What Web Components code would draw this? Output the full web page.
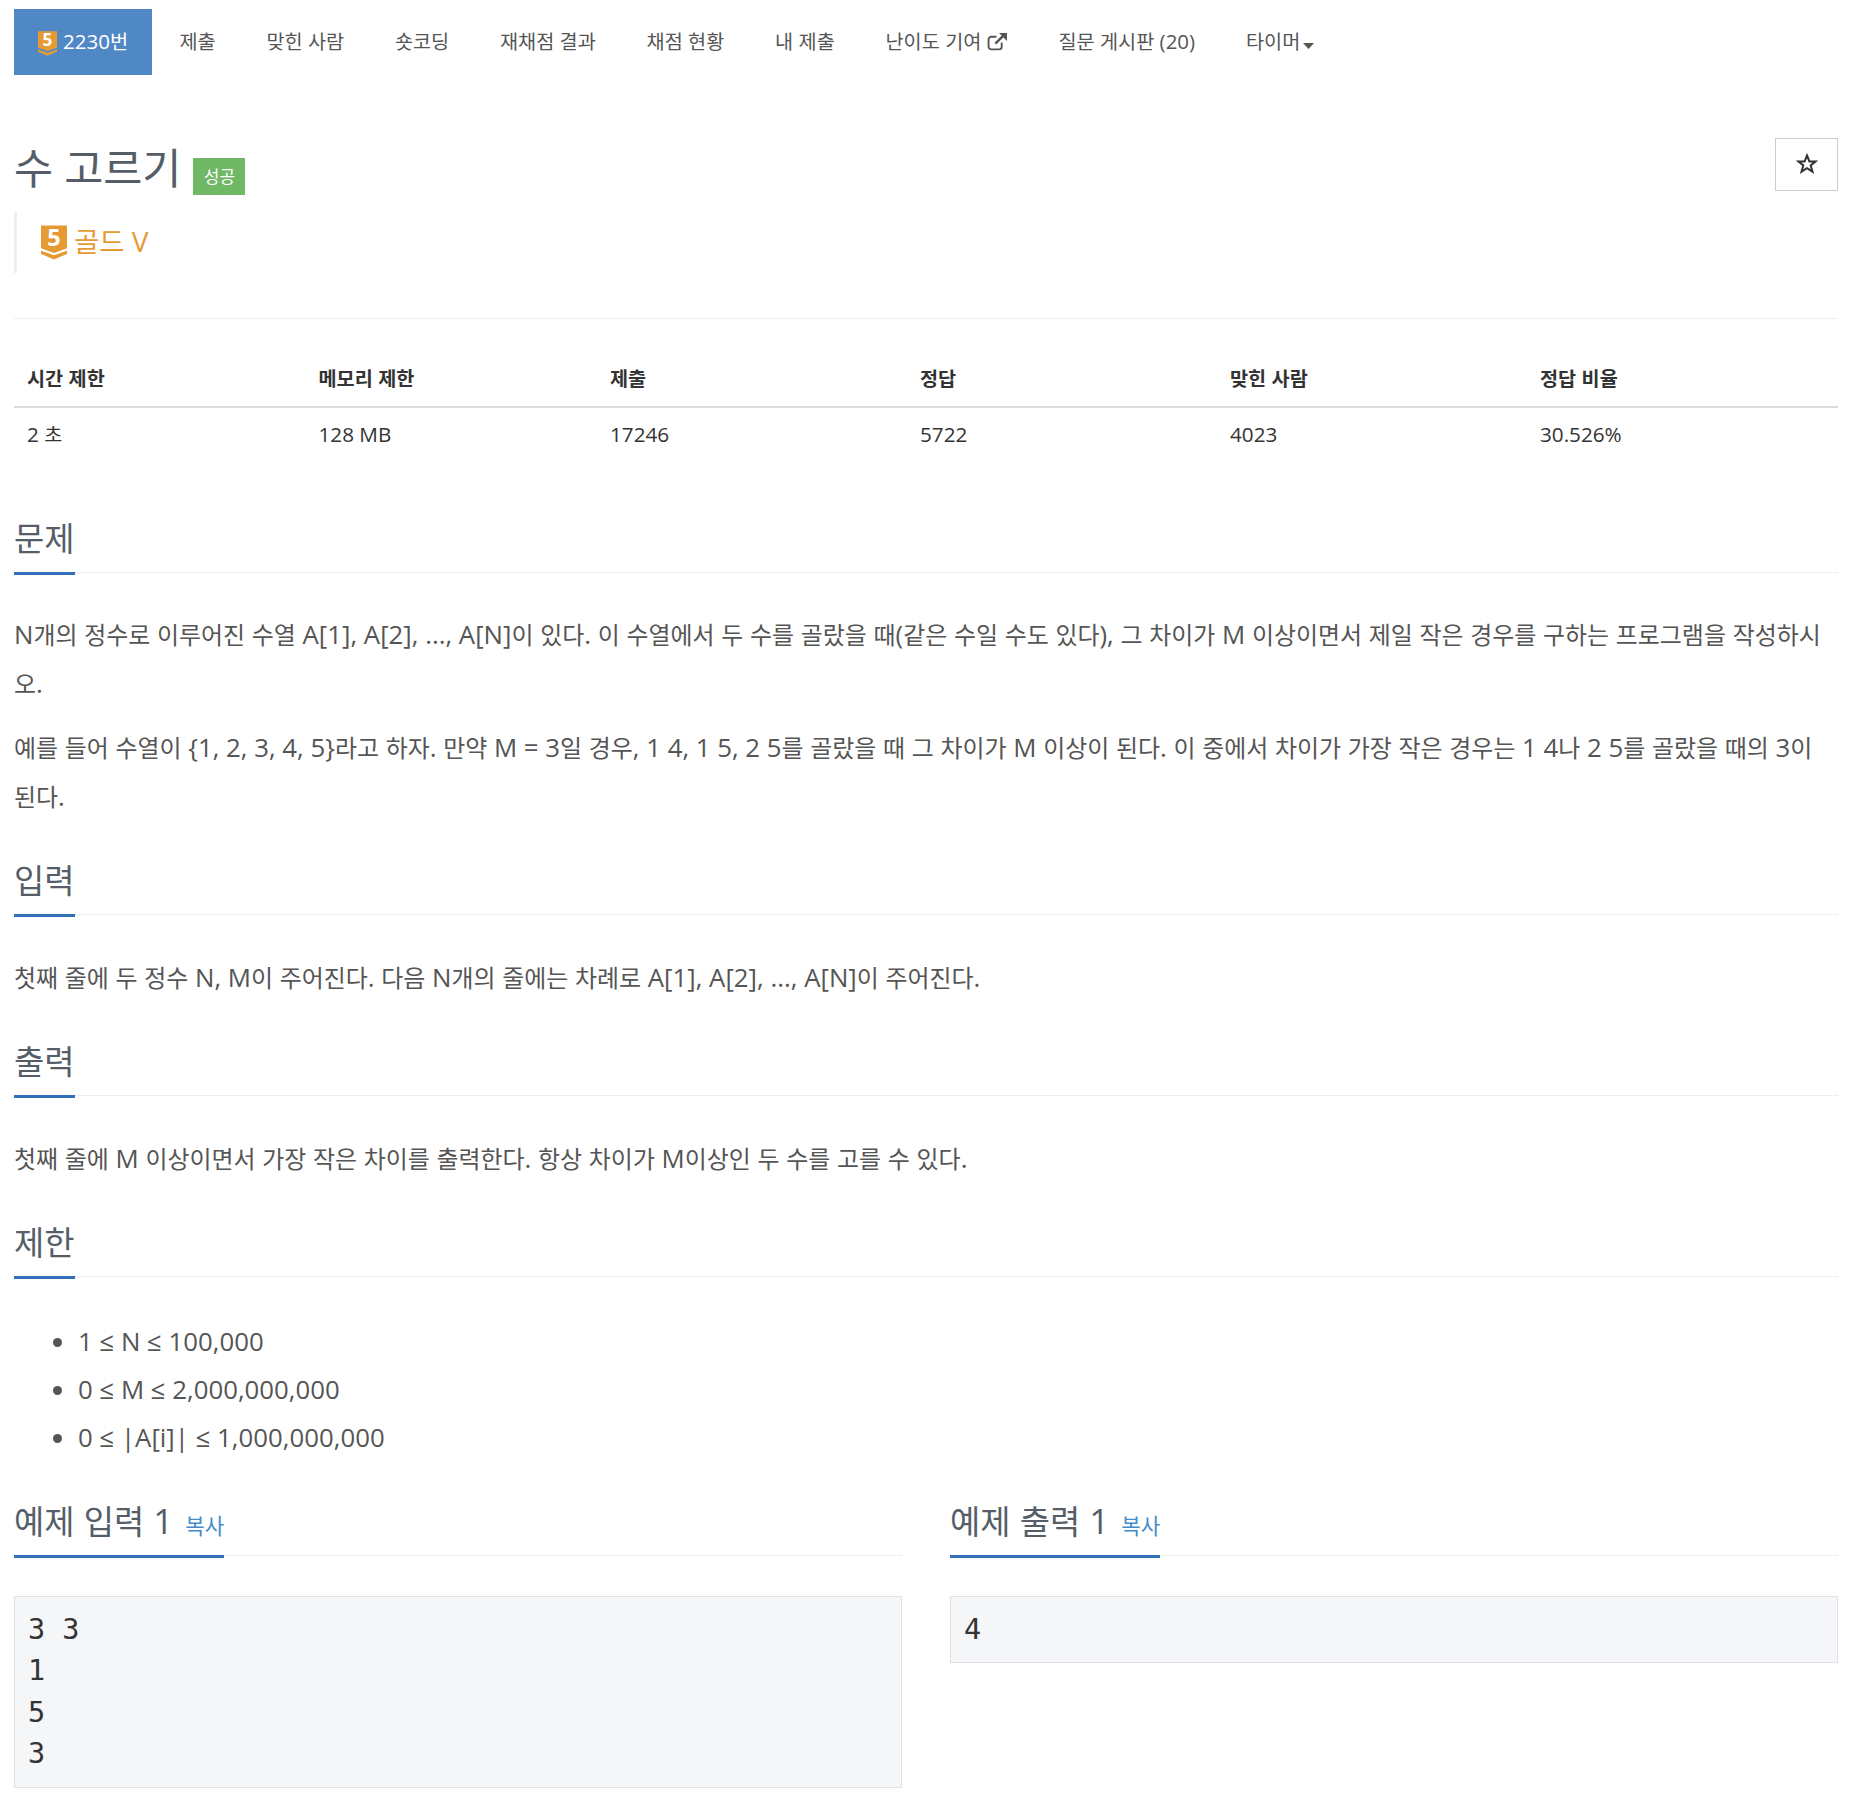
<!DOCTYPE html>
<html lang="ko"><head><meta charset="utf-8"><style>
html,body{margin:0;background:#fff}
body{font-family:"Open Sans","Noto Sans CJK KR",sans-serif;color:#333;width:1864px;height:1804px;overflow:hidden}
</style></head><body>
<boj-page></boj-page>
<template id="tier"><style>:host{display:inline-block;line-height:0;vertical-align:middle}svg{display:block;width:100%;height:100%;overflow:visible}</style>
<svg viewBox="0 0 40 52"><path d="M0 0H40V35L20 42 0 35Z" fill="#e69a33"/><path d="M0 38.500L20 45.500 40 38.500V43.500L20 52 0 43.500Z" fill="#e69a33"/><text x="20" y="32" text-anchor="middle" font-family="Open Sans" font-weight="700" font-size="36" fill="#fff">5</text></svg></template>
<script>
function def(n,css,html){customElements.define(n,class extends HTMLElement{constructor(){super();const s=this.attachShadow({mode:'open'});s.innerHTML='<style>'+css+'</style>'+html;
 if(n==='boj-page'){const w=document.createTreeWalker(s,NodeFilter.SHOW_TEXT);const ts=[];while(w.nextNode()){if(w.currentNode.parentNode.nodeName!=='STYLE'&&w.currentNode.parentNode.nodeName!=='text')ts.push(w.currentNode);}
  ts.forEach(t=>{const parts=t.nodeValue.split(/([가-힣]+)/);if(parts.length<2)return;const f=document.createDocumentFragment();parts.forEach((p,i)=>{if(!p)return;if(i%2){const k=document.createElement('span');k.className='k';k.textContent=p;f.appendChild(k);}else f.appendChild(document.createTextNode(p));});t.parentNode.replaceChild(f,t);});}
}});}
def('tier-icon','',document.getElementById('tier').innerHTML);
def('nav-tabs',`:host{display:flex;margin:9px 0 0 14px;height:66px;font-size:20.500px;--ko:.96;color:#555}`,`<slot></slot>`);
def('nav-tab',`:host{display:block;padding:0 25.400px;height:66px;line-height:64px;white-space:pre;color:#555}
:host([active]){background:#5088c6;color:#fff;padding:0 24px;margin-right:2px}`,`<slot></slot>`);
def('sec-head',`:host{display:block;border-bottom:1px dotted #ddd;height:57px;margin-top:var(--mt,0);--ko:.94}
h2{margin:0;display:inline-block;height:57px;border-bottom:3px solid #3070b8;font-size:35px;font-weight:400;color:#555e68;line-height:46px;white-space:nowrap}
::slotted(a){font-size:21.200px;color:#428bca;margin-left:3px;--ko:1}`,`<h2><slot></slot></h2>`);
def('sample-box',`:host{display:block;background:#f5f6f8;border:1px solid #e0e1e8;margin-top:40.500px;padding:12px 13px 12px;font-size:28.500px;line-height:41.400px;color:#333;white-space:pre;font-family:"DejaVu Sans Mono",monospace}`,`<slot></slot>`);
def('info-table',`:host{display:grid;grid-template-columns:291.500px 291.500px 310px 310px 310px 1fr;margin-top:31px;font-size:20.700px;--ko:.95}
::slotted(b){font-weight:700;padding:0 13px;height:56px;line-height:56px;border-bottom:2px solid #ddd;color:#333}
::slotted(span){padding:0 13px;line-height:52px;height:52px;color:#333}`,`<slot></slot>`);
def('boj-page',`:host{display:block;color:#555}
.k{font-size:calc(1em * var(--ko,1))}
main{margin:0 26px 0 14px;width:1824px}
.top{display:flex;justify-content:space-between;margin-top:64px;height:58px}
h1{margin:0;font-size:42.500px;font-weight:400;color:#555e68;line-height:58px;display:flex;white-space:pre}
.ok{display:inline-block;background:#70b766;color:#fff;font-size:17px;width:52px;height:37px;line-height:37px;text-align:center;margin:19px 0 0 12px}
.star{width:61px;height:51px;border:1px solid #ccc;display:flex;align-items:center;justify-content:center;margin-top:-1px}
.rank{display:flex;align-items:center;border-left:3px solid #eee;height:61px;margin-top:15px;padding-left:24px;color:#e69a33;font-size:28px;line-height:40px;gap:7px;--ko:.98}
.rank span.t{position:relative;top:-1px}
hr{border:0;border-top:1px solid #eee;margin:45px 0 0}
p{margin:0;font-size:25.800px;line-height:48px;color:#555;--ko:.928}
p i{font-style:normal}
.sec p{margin-top:37px}
.sec p + p{margin-top:15px}
.sec ~ .sec p{margin-top:38px}
ul{margin:40px 0 0;padding:0 0 0 64px;font-size:25.800px;line-height:48px;color:#555}
.cols{display:grid;grid-template-columns:888px 888px;gap:48px}
`,`<nav-tabs>
<nav-tab active><tier-icon style="width:19px;height:25px;margin:0 6px 0 0"></tier-icon>2230번</nav-tab>
<nav-tab>제출</nav-tab><nav-tab>맞힌 사람</nav-tab><nav-tab>숏코딩</nav-tab><nav-tab>재채점 결과</nav-tab><nav-tab>채점 현황</nav-tab><nav-tab>내 제출</nav-tab>
<nav-tab>난이도 기여 <svg width="21" height="19" viewBox="0 0 20 18" fill="none" stroke="#555" stroke-width="1.800" style="vertical-align:-2px"><path d="M14 10v4a2.500 2.500 0 0 1-2.500 2.500H4A2.500 2.500 0 0 1 1.500 14V7A2.500 2.500 0 0 1 4 4.500h5"/><path d="M8 11L17 2" stroke-width="2.400"/><path d="M11.500 1H19V8.500Z" fill="#555" stroke="none"/></svg></nav-tab>
<nav-tab>질문 게시판 (20)</nav-tab>
<nav-tab>타이머<svg width="11" height="6" viewBox="0 0 11 6" style="margin:0 0 0 3px;vertical-align:0"><path d="M0 0H11L5.500 6Z" fill="#555"/></svg></nav-tab>
</nav-tabs>
<main>
<div class="top"><h1><span>수 고르기</span><span class="ok">성공</span></h1><div class="star"><svg width="22" height="21" viewBox="0 0 22 21" style="margin-top:-2px"><path d="M11 2.500L13.400 8.400H19.700L14.700 12.400L16.500 18.700L11 15.100L5.500 18.700L7.300 12.400L2.300 8.400H8.600Z" fill="none" stroke="#333" stroke-width="2"/></svg></div></div>
<div class="rank"><tier-icon style="width:26px;height:35px"></tier-icon><span class="t">골드 V</span></div>
<hr>
<info-table><b>시간 제한</b><b>메모리 제한</b><b>제출</b><b>정답</b><b>맞힌 사람</b><b>정답 비율</b>
<span>2 초</span><span>128 MB</span><span>17246</span><span>5722</span><span>4023</span><span>30.526%</span></info-table>
<div class="sec"><sec-head style="--mt:55px">문제</sec-head>
<p>N개의 정수로 이루어진 수열 A[1], A[2], ..., A[N]이 있다. 이 수열에서 두 수를 골랐을 때(같은 수일 수도 있다), 그 차이가 M 이상이면서 제일 작은 경우를 구하는 프로그램을 작성하시<i>오</i>.</p>
<p>예를 들어 수열이 {1, 2, 3, 4, 5}라고 하자. 만약 M = 3일 경우, 1 4, 1 5, 2 5를 골랐을 때 그 차이가 M 이상이 된다. 이 중에서 차이가 가장 작은 경우는 1 4나 2 5를 골랐을 때의 3이 된다.</p></div>
<div class="sec"><sec-head style="--mt:35.500px">입력</sec-head><p>첫째 줄에 두 정수 N, M이 주어진다. 다음 N개의 줄에는 차례로 A[1], A[2], ..., A[N]이 주어진다.</p></div>
<div class="sec"><sec-head style="--mt:36px">출력</sec-head><p>첫째 줄에 M 이상이면서 가장 작은 차이를 출력한다. 항상 차이가 M이상인 두 수를 고를 수 있다.</p></div>
<div class="sec"><sec-head style="--mt:36px">제한</sec-head>
<ul><li>1 ≤ N ≤ 100,000</li><li>0 ≤ M ≤ 2,000,000,000</li><li>0 ≤ |A[i]| ≤ 1,000,000,000</li></ul></div>
<div class="cols">
<div><sec-head style="--mt:37px">예제 입력 1 <a>복사</a></sec-head><sample-box>3 3
1
5
3</sample-box></div>
<div><sec-head style="--mt:37px">예제 출력 1 <a>복사</a></sec-head><sample-box>4</sample-box></div>
</div>
</main>`);
</script>
</body></html>
